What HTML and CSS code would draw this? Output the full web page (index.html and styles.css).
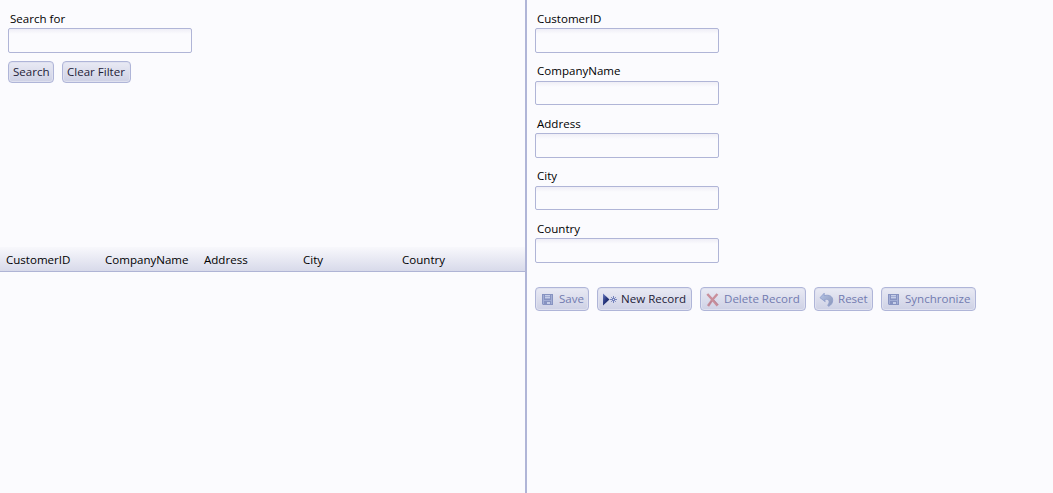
FILE: index.html
```html
<!DOCTYPE html>
<html lang="en">
<head>
<meta charset="utf-8">
<title>Customers</title>
<link rel="stylesheet" href="styles.css">
</head>
<body>
<svg class="defs" width="0" height="0" aria-hidden="true">
  <defs>
    <linearGradient id="arrow" x2="1" y2="1"><stop stop-color="#6f7fc4"/><stop offset=".5" stop-color="#26357c"/><stop offset="1" stop-color="#192554"/></linearGradient>
    <linearGradient id="undo" x2="1" y2="1"><stop stop-color="#b4c3e6"/><stop offset="1" stop-color="#8b96b8"/></linearGradient>
    <symbol id="disk" viewBox="0 0 16 16"><path fill="#8793c1" d="M2 3h11v11H3l-1-1z"/><path fill="#a3aed5" d="M3 4h9v9H3z"/><path fill="#8793c1" d="M4 3h1v5H4zM10 3h1v5h-1zM4 8h7v1H4zM4 10h7v4H4z"/><path fill="#c6cee8" d="M5 4h5v1H5zM5 6h5v1H5zM7 11h3v2H7z"/></symbol>
  </defs>
</svg>
<main class="layout">
  <section class="browse">
    <form class="search">
      <label class="field"><span class="label">Search for</span><input class="input" type="text"></label>
      <div class="actions">
        <button type="button" class="button find"><span>Search</span></button>
        <button type="button" class="button clear"><span>Clear Filter</span></button>
      </div>
    </form>
    <div class="grid-header">
      <span>CustomerID</span><span>CompanyName</span><span>Address</span><span>City</span><span>Country</span>
    </div>
  </section>
  <section class="details">
    <div class="fields">
      <label class="field"><span class="label">CustomerID</span><input class="input" type="text"></label>
      <label class="field"><span class="label">CompanyName</span><input class="input" type="text"></label>
      <label class="field"><span class="label">Address</span><input class="input" type="text"></label>
      <label class="field"><span class="label">City</span><input class="input" type="text"></label>
      <label class="field"><span class="label">Country</span><input class="input" type="text"></label>
    </div>
    <div class="toolbar">
      <button type="button" class="button save" disabled><svg class="icon"><use href="#disk"/></svg><span>Save</span></button>
      <button type="button" class="button new"><svg class="icon" viewBox="0 0 16 16"><path fill="url(#arrow)" d="M1 2.500l6.500 6L1 14.500z"/><path stroke="#7583bd" d="M11.500 5v7M8 8.500h7M9.200 6.200l4.600 4.600M13.800 6.200l-4.600 4.600"/><path fill="#e4e8f7" d="M11 8h1v1h-1z"/></svg><span>New Record</span></button>
      <button type="button" class="button delete" disabled><svg class="icon" viewBox="0 0 16 16"><path fill="none" stroke="#c98f9b" stroke-width="2.500" d="M2.300 3Q7 8 12.600 14.600M12.400 3Q7.500 8 3 15"/><path fill="none" stroke="#ad8097" stroke-width=".8" d="M9 9.200l4.300 4.800M6.500 10l-3 4.500"/></svg><span>Delete Record</span></button>
      <button type="button" class="button reset" disabled><svg class="icon" viewBox="0 0 16 16"><path fill="url(#undo)" stroke="#8b9bc9" stroke-width=".8" d="M1 6.700L5.200 2.200v2.400C10.800 3.300 13.800 5.700 13.700 9.300c0 2.600-1.400 4.600-3.900 6l-1.200-1c2.100-2.200 2.800-6.900-2.900-5.800l.5 2.200z"/></svg><span>Reset</span></button>
      <button type="button" class="button sync" disabled><svg class="icon"><use href="#disk"/></svg><span>Synchronize</span></button>
    </div>
  </section>
</main>
</body>
</html>
```
FILE: styles.css
```css
* { box-sizing: border-box; }
body {
  margin: 0;
  overflow: hidden;
  background: #fbfbfe;
  color: #000;
  font: 11.55px/16px "Open Sans", "Noto Sans", sans-serif;
}
.defs { display: block; height: 0; }
.layout { display: grid; grid-template-columns: 527px 1fr; height: 493px; }
.browse { border-right: 2px solid #b0b5d7; }
.search { height: 247px; padding: 11px 8px 0; }
.details { padding: 11px 8px 0; }
.field { display: block; }
.label { display: block; height: 17px; padding-left: 2px; }
.input {
  display: block;
  width: 184px;
  height: 25px;
  padding: 0 5px;
  border: 1px solid #b0b5d7;
  border-radius: 2px;
  background: linear-gradient(#efeef6, #fbfbfe 5px);
  font: inherit;
}
.fields .field:nth-child(even) .label { height: 18px; }
.fields .field:nth-child(even) .input { height: 24px; }
.actions, .toolbar { display: flex; gap: 8px; }
.actions { margin-top: 8px; }
.fields { display: grid; grid-auto-rows: 52.4px; }
.toolbar { margin-top: 14px; }
.button {
  display: flex;
  align-items: center;
  height: 24px;
  padding: 0 4px;
  border: 1px solid #afb5d8;
  border-radius: 4px;
  background: linear-gradient(#e9eaf4, #ced1e5);
  box-shadow: inset 0 0 0 1px #dfe1ef;
  color: #1d2138;
  font: inherit;
  white-space: nowrap;
}
.actions .button { height: 22px; }
.button:disabled { color: #727bb0; }
.icon { flex: none; width: 16px; height: 16px; margin-right: 3px; }
.find { width: 46px; }
.clear { width: 69px; }
.save { width: 54px; }
.new { width: 95px; }
.delete { width: 106px; }
.reset { width: 59px; }
.sync { width: 95px; }
.grid-header {
  display: grid;
  grid-template-columns: repeat(5, 99px);
  height: 25px;
  padding: 5px 0 0 6px;
  border-bottom: 1px solid #afb4d5;
  background: linear-gradient(#f8f8fc, #d8daea);
}
```
